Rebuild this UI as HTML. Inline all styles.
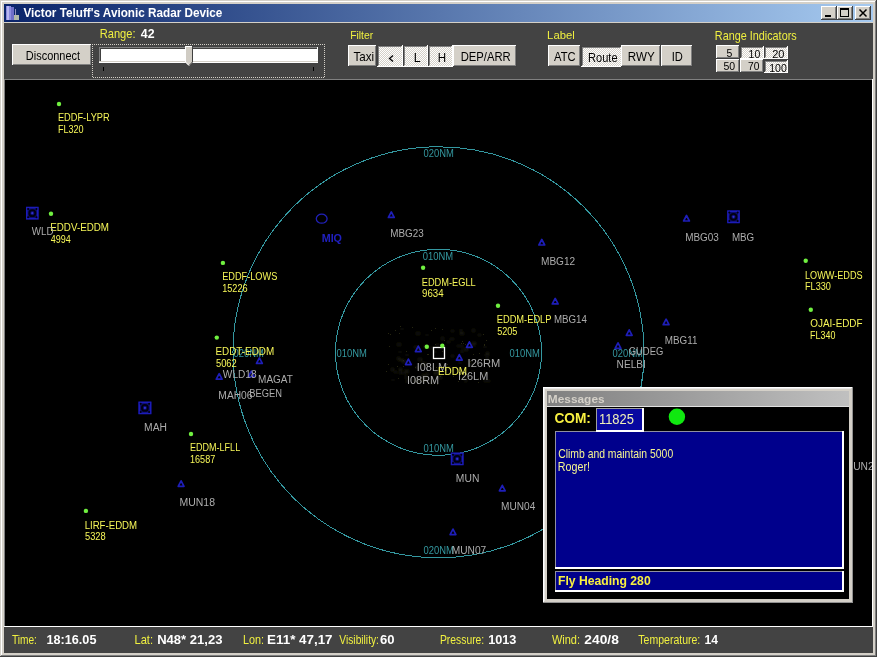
<!DOCTYPE html><html><head><meta charset="utf-8"><style>html,body{margin:0;padding:0;background:#D4D0C8;overflow:hidden}svg{display:block;font-family:"Liberation Sans",sans-serif;will-change:transform}</style></head><body><svg width="877" height="657" viewBox="0 0 877 657"><rect x="0" y="0" width="877" height="657" fill="#D4D0C8"/>
<rect x="0" y="0" width="876" height="1" fill="#D4D0C8"/>
<rect x="1" y="1" width="874" height="1" fill="#FFFFFF"/>
<rect x="1" y="1" width="1" height="654" fill="#FFFFFF"/>
<rect x="876" y="0" width="1" height="657" fill="#404040"/>
<rect x="0" y="656" width="877" height="1" fill="#404040"/>
<rect x="875" y="1" width="1" height="655" fill="#808080"/>
<rect x="1" y="655" width="875" height="1" fill="#808080"/>
<defs><linearGradient id="tg" x1="0" x2="1" y1="0" y2="0"><stop offset="0" stop-color="#0A246A"/><stop offset="1" stop-color="#A6CAF0"/></linearGradient><linearGradient id="mg" x1="0" x2="1" y1="0" y2="0"><stop offset="0" stop-color="#808080"/><stop offset="1" stop-color="#C0C0C0"/></linearGradient><pattern id="dot" width="2" height="2" patternUnits="userSpaceOnUse"><rect width="1" height="1" fill="#D4D0C8"/><rect x="1" y="1" width="1" height="1" fill="#D4D0C8"/></pattern><pattern id="dith" width="2" height="2" patternUnits="userSpaceOnUse"><rect width="2" height="2" fill="#D4D0C8"/><rect width="1" height="1" fill="#FFFFFF"/><rect x="1" y="1" width="1" height="1" fill="#FFFFFF"/></pattern></defs>
<rect x="4" y="4" width="869" height="18" fill="url(#tg)"/>
<rect x="6" y="6" width="5" height="14" fill="#8C8CE0"/>
<rect x="7" y="6" width="2" height="14" fill="#B8B8F0"/>
<rect x="11" y="7" width="3" height="13" fill="#6E6EC8"/>
<rect x="14" y="15" width="5" height="5" fill="#B0B8A8"/>
<rect x="15" y="9" width="1" height="6" fill="#9090C0"/>
<text x="23.38" y="17.0" font-size="12.32" fill="#FFFFFF" font-weight="bold" textLength="199.03" lengthAdjust="spacingAndGlyphs">Victor Teluff's Avionic Radar Device</text>
<rect x="821" y="6" width="16" height="14" fill="#404040"/>
<rect x="821" y="6" width="15" height="13" fill="#FFFFFF"/>
<rect x="822" y="7" width="14" height="12" fill="#808080"/>
<rect x="822" y="7" width="13" height="11" fill="#D4D0C8"/>
<rect x="823" y="8" width="12" height="10" fill="#D4D0C8"/>
<rect x="825" y="15" width="6" height="2" fill="#000000"/>
<rect x="837" y="6" width="16" height="14" fill="#404040"/>
<rect x="837" y="6" width="15" height="13" fill="#FFFFFF"/>
<rect x="838" y="7" width="14" height="12" fill="#808080"/>
<rect x="838" y="7" width="13" height="11" fill="#D4D0C8"/>
<rect x="839" y="8" width="12" height="10" fill="#D4D0C8"/>
<rect x="840.5" y="8.5" width="8" height="8" fill="none" stroke="#000" stroke-width="1"/>
<rect x="840" y="8" width="9" height="2" fill="#000"/>
<rect x="855" y="6" width="16" height="14" fill="#404040"/>
<rect x="855" y="6" width="15" height="13" fill="#FFFFFF"/>
<rect x="856" y="7" width="14" height="12" fill="#808080"/>
<rect x="856" y="7" width="13" height="11" fill="#D4D0C8"/>
<rect x="857" y="8" width="12" height="10" fill="#D4D0C8"/>
<path d="M859.5 9.5 L866.5 16.5 M866.5 9.5 L859.5 16.5" stroke="#000" stroke-width="1.5"/>
<rect x="4" y="22" width="869" height="1" fill="#D4D0C8"/>
<rect x="4" y="23" width="869" height="56" fill="#434343"/>
<rect x="4" y="627" width="869" height="26" fill="#434343"/>
<rect x="4" y="79" width="869" height="1" fill="#808080"/>
<rect x="4" y="79" width="1" height="548" fill="#808080"/>
<rect x="872" y="79" width="1" height="548" fill="#FFFFFF"/>
<rect x="4" y="626" width="869" height="1" fill="#FFFFFF"/>
<rect x="5" y="80" width="867" height="546" fill="#000000"/>
<rect x="12" y="44" width="80" height="22" fill="#404040"/>
<rect x="12" y="44" width="79" height="21" fill="#FFFFFF"/>
<rect x="13" y="45" width="78" height="20" fill="#808080"/>
<rect x="13" y="45" width="77" height="19" fill="#D4D0C8"/>
<rect x="14" y="46" width="76" height="18" fill="#D4D0C8"/>
<text x="25.82" y="59.9" font-size="12.61" fill="#000000" font-weight="normal" textLength="54.25" lengthAdjust="spacingAndGlyphs">Disconnect</text>
<text x="99.71" y="38.4" font-size="12.46" fill="#F0F040" font-weight="normal" textLength="35.78" lengthAdjust="spacingAndGlyphs">Range:</text>
<text x="140.82" y="38.4" font-size="12.46" fill="#FFFFFF" font-weight="bold" textLength="13.71" lengthAdjust="spacingAndGlyphs">42</text>
<rect x="92" y="44" width="233" height="1" fill="url(#dot)"/>
<rect x="92" y="77" width="233" height="1" fill="url(#dot)"/>
<rect x="92" y="44" width="1" height="34" fill="url(#dot)"/>
<rect x="324" y="44" width="1" height="34" fill="url(#dot)"/>
<rect x="99" y="47" width="219" height="15" fill="#FFFFFF"/>
<rect x="99" y="47" width="219" height="1" fill="#808080"/>
<rect x="99" y="47" width="1" height="15" fill="#808080"/>
<rect x="100" y="48" width="217" height="1" fill="#404040"/>
<rect x="100" y="48" width="1" height="13" fill="#404040"/>
<rect x="317" y="47" width="1" height="15" fill="#FFFFFF"/>
<rect x="99" y="61" width="219" height="1" fill="#D4D0C8"/>
<rect x="99" y="62" width="219" height="1" fill="#FFFFFF"/>
<rect x="101" y="49" width="216" height="12" fill="#FFFFFF"/>
<path d="M185 46 H193 V62 L189 66 L185 62 Z" fill="#D4D0C8"/>
<rect x="186" y="47" width="6" height="15" fill="#D0CCC4"/>
<path d="M185.5 62 V46.5 H192.5" fill="none" stroke="#FFFFFF" stroke-width="1"/>
<path d="M185.5 62 L189 65.5" fill="none" stroke="#FFFFFF" stroke-width="1"/>
<path d="M192.5 46 V62 L189 65.5" fill="none" stroke="#404040" stroke-width="1"/>
<rect x="103" y="67" width="1" height="4" fill="#000000"/>
<rect x="313" y="67" width="1" height="4" fill="#000000"/>
<text x="350.17" y="38.9" font-size="11.45" fill="#F0F040" font-weight="normal" textLength="23.01" lengthAdjust="spacingAndGlyphs">Filter</text>
<rect x="348" y="45" width="29" height="22" fill="#404040"/>
<rect x="348" y="45" width="28" height="21" fill="#FFFFFF"/>
<rect x="349" y="46" width="27" height="20" fill="#808080"/>
<rect x="349" y="46" width="26" height="19" fill="#D4D0C8"/>
<rect x="350" y="47" width="25" height="18" fill="#D4D0C8"/>
<text x="353.41" y="60.9" font-size="12.90" fill="#000000" font-weight="normal" textLength="20.69" lengthAdjust="spacingAndGlyphs">Taxi</text>
<rect x="377" y="45" width="26" height="22" fill="#FFFFFF"/>
<rect x="377" y="45" width="25" height="21" fill="#404040"/>
<rect x="378" y="46" width="24" height="20" fill="#D4D0C8"/>
<rect x="378" y="46" width="23" height="19" fill="#808080"/>
<rect x="379" y="47" width="23" height="19" fill="url(#dith)"/>
<path d="M393 55.5 L389.5 58.5 L393 61.5" fill="none" stroke="#000" stroke-width="1.3"/>
<rect x="403" y="45" width="25" height="22" fill="#FFFFFF"/>
<rect x="403" y="45" width="24" height="21" fill="#404040"/>
<rect x="404" y="46" width="23" height="20" fill="#D4D0C8"/>
<rect x="404" y="46" width="22" height="19" fill="#808080"/>
<rect x="405" y="47" width="22" height="19" fill="url(#dith)"/>
<text x="413.81" y="61.6" font-size="12.46" fill="#000000" font-weight="normal" textLength="6.87" lengthAdjust="spacingAndGlyphs">L</text>
<rect x="428" y="45" width="25" height="22" fill="#FFFFFF"/>
<rect x="428" y="45" width="24" height="21" fill="#404040"/>
<rect x="429" y="46" width="23" height="20" fill="#D4D0C8"/>
<rect x="429" y="46" width="22" height="19" fill="#808080"/>
<rect x="430" y="47" width="22" height="19" fill="url(#dith)"/>
<text x="437.77" y="61.6" font-size="12.46" fill="#000000" font-weight="normal" textLength="8.38" lengthAdjust="spacingAndGlyphs">H</text>
<rect x="453" y="45" width="64" height="22" fill="#404040"/>
<rect x="453" y="45" width="63" height="21" fill="#FFFFFF"/>
<rect x="454" y="46" width="62" height="20" fill="#808080"/>
<rect x="454" y="46" width="61" height="19" fill="#D4D0C8"/>
<rect x="455" y="47" width="60" height="18" fill="#D4D0C8"/>
<text x="460.70" y="60.6" font-size="12.17" fill="#000000" font-weight="normal" textLength="50.07" lengthAdjust="spacingAndGlyphs">DEP/ARR</text>
<text x="547.10" y="38.8" font-size="11.16" fill="#F0F040" font-weight="normal" textLength="27.66" lengthAdjust="spacingAndGlyphs">Label</text>
<rect x="548" y="45" width="33" height="22" fill="#404040"/>
<rect x="548" y="45" width="32" height="21" fill="#FFFFFF"/>
<rect x="549" y="46" width="31" height="20" fill="#808080"/>
<rect x="549" y="46" width="30" height="19" fill="#D4D0C8"/>
<rect x="550" y="47" width="29" height="18" fill="#D4D0C8"/>
<text x="554.04" y="60.7" font-size="12.61" fill="#000000" font-weight="normal" textLength="21.51" lengthAdjust="spacingAndGlyphs">ATC</text>
<rect x="581" y="46" width="41" height="21" fill="#FFFFFF"/>
<rect x="581" y="46" width="40" height="20" fill="#404040"/>
<rect x="582" y="47" width="39" height="19" fill="#D4D0C8"/>
<rect x="582" y="47" width="38" height="18" fill="#808080"/>
<rect x="583" y="48" width="38" height="18" fill="url(#dith)"/>
<text x="588.12" y="61.6" font-size="12.17" fill="#000000" font-weight="normal" textLength="29.46" lengthAdjust="spacingAndGlyphs">Route</text>
<rect x="621" y="45" width="40" height="22" fill="#404040"/>
<rect x="621" y="45" width="39" height="21" fill="#FFFFFF"/>
<rect x="622" y="46" width="38" height="20" fill="#808080"/>
<rect x="622" y="46" width="37" height="19" fill="#D4D0C8"/>
<rect x="623" y="47" width="36" height="18" fill="#D4D0C8"/>
<text x="627.77" y="60.7" font-size="12.61" fill="#000000" font-weight="normal" textLength="26.92" lengthAdjust="spacingAndGlyphs">RWY</text>
<rect x="661" y="45" width="32" height="22" fill="#404040"/>
<rect x="661" y="45" width="31" height="21" fill="#FFFFFF"/>
<rect x="662" y="46" width="30" height="20" fill="#808080"/>
<rect x="662" y="46" width="29" height="19" fill="#D4D0C8"/>
<rect x="663" y="47" width="28" height="18" fill="#D4D0C8"/>
<text x="671.70" y="60.7" font-size="12.61" fill="#000000" font-weight="normal" textLength="11.16" lengthAdjust="spacingAndGlyphs">ID</text>
<text x="714.83" y="40.4" font-size="12.46" fill="#F0F040" font-weight="normal" textLength="81.85" lengthAdjust="spacingAndGlyphs">Range Indicators</text>
<rect x="716" y="45" width="24" height="14" fill="#404040"/>
<rect x="716" y="45" width="23" height="13" fill="#FFFFFF"/>
<rect x="717" y="46" width="22" height="12" fill="#808080"/>
<rect x="717" y="46" width="21" height="11" fill="#D4D0C8"/>
<rect x="718" y="47" width="20" height="10" fill="#D4D0C8"/>
<text x="726.58" y="56.6" font-size="11.30" fill="#000000" font-weight="normal" textLength="5.85" lengthAdjust="spacingAndGlyphs">5</text>
<rect x="740" y="46" width="24" height="13" fill="#FFFFFF"/>
<rect x="740" y="46" width="23" height="12" fill="#404040"/>
<rect x="741" y="47" width="22" height="11" fill="#D4D0C8"/>
<rect x="741" y="47" width="21" height="10" fill="#808080"/>
<rect x="742" y="48" width="21" height="10" fill="url(#dith)"/>
<text x="748.61" y="57.5" font-size="11.16" fill="#000000" font-weight="normal" textLength="11.68" lengthAdjust="spacingAndGlyphs">10</text>
<rect x="764" y="46" width="24" height="13" fill="#FFFFFF"/>
<rect x="764" y="46" width="23" height="12" fill="#404040"/>
<rect x="765" y="47" width="22" height="11" fill="#D4D0C8"/>
<rect x="765" y="47" width="21" height="10" fill="#808080"/>
<rect x="766" y="48" width="21" height="10" fill="url(#dith)"/>
<text x="772.15" y="57.5" font-size="11.16" fill="#000000" font-weight="normal" textLength="12.26" lengthAdjust="spacingAndGlyphs">20</text>
<rect x="716" y="59" width="24" height="14" fill="#404040"/>
<rect x="716" y="59" width="23" height="13" fill="#FFFFFF"/>
<rect x="717" y="60" width="22" height="12" fill="#808080"/>
<rect x="717" y="60" width="21" height="11" fill="#D4D0C8"/>
<rect x="718" y="61" width="20" height="10" fill="#D4D0C8"/>
<text x="723.48" y="70.3" font-size="11.30" fill="#000000" font-weight="normal" textLength="11.71" lengthAdjust="spacingAndGlyphs">50</text>
<rect x="740" y="59" width="24" height="14" fill="#404040"/>
<rect x="740" y="59" width="23" height="13" fill="#FFFFFF"/>
<rect x="741" y="60" width="22" height="12" fill="#808080"/>
<rect x="741" y="60" width="21" height="11" fill="#D4D0C8"/>
<rect x="742" y="61" width="20" height="10" fill="#D4D0C8"/>
<text x="747.99" y="70.3" font-size="11.30" fill="#000000" font-weight="normal" textLength="11.39" lengthAdjust="spacingAndGlyphs">70</text>
<rect x="764" y="60" width="24" height="13" fill="#FFFFFF"/>
<rect x="764" y="60" width="23" height="12" fill="#404040"/>
<rect x="765" y="61" width="22" height="11" fill="#D4D0C8"/>
<rect x="765" y="61" width="21" height="10" fill="#808080"/>
<rect x="766" y="62" width="21" height="10" fill="url(#dith)"/>
<text x="769.21" y="71.5" font-size="11.74" fill="#000000" font-weight="normal" textLength="17.60" lengthAdjust="spacingAndGlyphs">100</text>
<text x="11.95" y="643.8" font-size="13.04" fill="#F0F040" font-weight="normal" textLength="25.00" lengthAdjust="spacingAndGlyphs">Time:</text>
<text x="46.48" y="643.8" font-size="13.04" fill="#FFFFFF" font-weight="bold" textLength="49.97" lengthAdjust="spacingAndGlyphs">18:16.05</text>
<text x="134.51" y="643.8" font-size="13.04" fill="#F0F040" font-weight="normal" textLength="18.52" lengthAdjust="spacingAndGlyphs">Lat:</text>
<text x="157.15" y="643.8" font-size="13.04" fill="#FFFFFF" font-weight="bold" textLength="65.36" lengthAdjust="spacingAndGlyphs">N48* 21,23</text>
<text x="242.93" y="643.8" font-size="13.04" fill="#F0F040" font-weight="normal" textLength="21.05" lengthAdjust="spacingAndGlyphs">Lon:</text>
<text x="267.13" y="643.8" font-size="13.04" fill="#FFFFFF" font-weight="bold" textLength="65.45" lengthAdjust="spacingAndGlyphs">E11* 47,17</text>
<text x="339.35" y="643.8" font-size="13.04" fill="#F0F040" font-weight="normal" textLength="39.59" lengthAdjust="spacingAndGlyphs">Visibility:</text>
<text x="380.04" y="643.8" font-size="13.04" fill="#FFFFFF" font-weight="bold" textLength="14.51" lengthAdjust="spacingAndGlyphs">60</text>
<text x="439.97" y="643.8" font-size="13.04" fill="#F0F040" font-weight="normal" textLength="44.25" lengthAdjust="spacingAndGlyphs">Pressure:</text>
<text x="488.17" y="643.8" font-size="13.04" fill="#FFFFFF" font-weight="bold" textLength="28.27" lengthAdjust="spacingAndGlyphs">1013</text>
<text x="551.95" y="643.8" font-size="13.04" fill="#F0F040" font-weight="normal" textLength="28.06" lengthAdjust="spacingAndGlyphs">Wind:</text>
<text x="584.32" y="643.8" font-size="13.04" fill="#FFFFFF" font-weight="bold" textLength="34.53" lengthAdjust="spacingAndGlyphs">240/8</text>
<text x="638.34" y="643.8" font-size="13.04" fill="#F0F040" font-weight="normal" textLength="61.93" lengthAdjust="spacingAndGlyphs">Temperature:</text>
<text x="704.61" y="643.8" font-size="13.04" fill="#FFFFFF" font-weight="bold" textLength="13.48" lengthAdjust="spacingAndGlyphs">14</text>
<g clip-path="url(#rc)">
<clipPath id="rc"><rect x="5" y="80" width="867" height="546"/></clipPath>
<circle cx="438.5" cy="352.3" r="103" fill="none" stroke="#3498A0" stroke-width="1" shape-rendering="crispEdges"/>
<circle cx="438.5" cy="352.3" r="205.5" fill="none" stroke="#3498A0" stroke-width="1" shape-rendering="crispEdges"/>
<filter id="bl" x="-20%" y="-20%" width="140%" height="140%"><feGaussianBlur stdDeviation="1.6"/></filter>
<g fill="#1C1C0C" filter="url(#bl)">
<rect x="450" y="368" width="4" height="2"/>
<rect x="472" y="370" width="2" height="2"/>
<rect x="478" y="334" width="3" height="2"/>
<rect x="426" y="334" width="2" height="2"/>
<rect x="461" y="350" width="2" height="3"/>
<rect x="404" y="371" width="2" height="3"/>
<rect x="401" y="328" width="2" height="2"/>
<rect x="465" y="380" width="2" height="2"/>
<rect x="417" y="380" width="4" height="2"/>
<rect x="406" y="380" width="2" height="3"/>
<rect x="418" y="348" width="2" height="2"/>
<rect x="414" y="346" width="4" height="2"/>
<rect x="448" y="366" width="2" height="3"/>
<rect x="424" y="345" width="4" height="3"/>
<rect x="406" y="354" width="2" height="2"/>
<rect x="414" y="379" width="4" height="3"/>
<rect x="472" y="329" width="3" height="3"/>
<rect x="426" y="373" width="3" height="2"/>
<rect x="459" y="362" width="2" height="2"/>
<rect x="464" y="378" width="3" height="3"/>
<rect x="439" y="376" width="3" height="3"/>
<rect x="399" y="368" width="3" height="3"/>
<rect x="392" y="379" width="2" height="2"/>
<rect x="422" y="361" width="2" height="3"/>
<rect x="416" y="366" width="2" height="3"/>
<rect x="457" y="345" width="2" height="2"/>
<rect x="460" y="345" width="3" height="2"/>
<rect x="460" y="332" width="4" height="3"/>
<rect x="391" y="368" width="3" height="3"/>
<rect x="434" y="351" width="2" height="2"/>
<rect x="468" y="346" width="2" height="2"/>
<rect x="486" y="358" width="2" height="3"/>
<rect x="399" y="351" width="2" height="2"/>
<rect x="472" y="344" width="3" height="2"/>
<rect x="486" y="352" width="3" height="3"/>
<rect x="436" y="344" width="3" height="2"/>
<rect x="399" y="372" width="4" height="2"/>
<rect x="451" y="355" width="3" height="2"/>
<rect x="397" y="343" width="4" height="3"/>
<rect x="394" y="371" width="3" height="2"/>
<rect x="464" y="348" width="4" height="3"/>
<rect x="472" y="342" width="4" height="3"/>
<rect x="484" y="346" width="2" height="2"/>
<rect x="435" y="370" width="3" height="3"/>
<rect x="434" y="372" width="4" height="3"/>
<rect x="423" y="363" width="4" height="3"/>
<rect x="423" y="374" width="4" height="3"/>
<rect x="486" y="380" width="4" height="2"/>
<rect x="441" y="337" width="3" height="3"/>
<rect x="416" y="332" width="4" height="3"/>
<rect x="405" y="370" width="4" height="3"/>
<rect x="418" y="358" width="4" height="3"/>
<rect x="460" y="329" width="2" height="3"/>
<rect x="450" y="338" width="4" height="2"/>
<rect x="451" y="330" width="3" height="2"/>
<rect x="405" y="376" width="2" height="3"/>
<rect x="485" y="354" width="4" height="2"/>
<rect x="430" y="347" width="4" height="2"/>
<rect x="447" y="341" width="3" height="2"/>
<rect x="423" y="379" width="3" height="2"/>
<rect x="457" y="358" width="2" height="3"/>
<rect x="397" y="357" width="3" height="3"/>
<rect x="484" y="372" width="3" height="3"/>
<rect x="469" y="363" width="3" height="3"/>
<rect x="402" y="360" width="4" height="3"/>
<rect x="484" y="380" width="4" height="2"/>
<rect x="423" y="376" width="2" height="3"/>
<rect x="399" y="359" width="4" height="2"/>
<rect x="421" y="375" width="4" height="3"/>
<rect x="431" y="381" width="3" height="3"/>
</g><g fill="#262610">
<rect x="436" y="367" width="1" height="1"/>
<rect x="426" y="376" width="1" height="1"/>
<rect x="403" y="360" width="1" height="1"/>
<rect x="463" y="343" width="1" height="1"/>
<rect x="412" y="327" width="1" height="1"/>
<rect x="484" y="344" width="1" height="1"/>
<rect x="483" y="334" width="1" height="1"/>
<rect x="388" y="364" width="1" height="1"/>
<rect x="486" y="340" width="1" height="1"/>
<rect x="390" y="334" width="1" height="1"/>
<rect x="427" y="354" width="1" height="1"/>
<rect x="444" y="340" width="1" height="1"/>
<rect x="435" y="328" width="1" height="1"/>
<rect x="437" y="375" width="1" height="1"/>
<rect x="461" y="343" width="1" height="1"/>
<rect x="437" y="384" width="1" height="1"/>
<rect x="440" y="376" width="1" height="1"/>
<rect x="478" y="378" width="1" height="1"/>
<rect x="388" y="333" width="1" height="1"/>
<rect x="415" y="367" width="1" height="1"/>
<rect x="450" y="368" width="1" height="1"/>
<rect x="389" y="346" width="1" height="1"/>
<rect x="457" y="373" width="1" height="1"/>
<rect x="400" y="326" width="1" height="1"/>
<rect x="444" y="366" width="1" height="1"/>
<rect x="397" y="366" width="1" height="1"/>
<rect x="406" y="351" width="1" height="1"/>
<rect x="470" y="361" width="1" height="1"/>
<rect x="458" y="381" width="1" height="1"/>
<rect x="453" y="376" width="1" height="1"/>
<rect x="473" y="354" width="1" height="1"/>
<rect x="457" y="368" width="1" height="1"/>
<rect x="479" y="353" width="1" height="1"/>
<rect x="465" y="344" width="1" height="1"/>
<rect x="386" y="371" width="1" height="1"/>
<rect x="447" y="364" width="1" height="1"/>
<rect x="435" y="344" width="1" height="1"/>
<rect x="403" y="366" width="1" height="1"/>
<rect x="478" y="382" width="1" height="1"/>
<rect x="442" y="351" width="1" height="1"/>
<rect x="442" y="329" width="1" height="1"/>
<rect x="462" y="341" width="1" height="1"/>
<rect x="395" y="330" width="1" height="1"/>
<rect x="484" y="345" width="1" height="1"/>
<rect x="431" y="330" width="1" height="1"/>
<rect x="428" y="354" width="1" height="1"/>
<rect x="399" y="333" width="1" height="1"/>
<rect x="450" y="374" width="1" height="1"/>
<rect x="398" y="378" width="1" height="1"/>
<rect x="489" y="367" width="1" height="1"/>
</g>
<text x="423.62" y="156.7" font-size="10.00" fill="#3498A0" font-weight="normal" textLength="30.36" lengthAdjust="spacingAndGlyphs">020NM</text>
<text x="422.82" y="259.6" font-size="10.00" fill="#3498A0" font-weight="normal" textLength="30.36" lengthAdjust="spacingAndGlyphs">010NM</text>
<text x="336.52" y="356.9" font-size="10.00" fill="#3498A0" font-weight="normal" textLength="30.36" lengthAdjust="spacingAndGlyphs">010NM</text>
<text x="509.62" y="357.0" font-size="10.00" fill="#3498A0" font-weight="normal" textLength="30.36" lengthAdjust="spacingAndGlyphs">010NM</text>
<text x="612.62" y="357.0" font-size="10.00" fill="#3498A0" font-weight="normal" textLength="30.36" lengthAdjust="spacingAndGlyphs">020NM</text>
<text x="233.62" y="356.9" font-size="10.00" fill="#3498A0" font-weight="normal" textLength="30.36" lengthAdjust="spacingAndGlyphs">020NM</text>
<text x="423.52" y="451.6" font-size="10.00" fill="#3498A0" font-weight="normal" textLength="30.36" lengthAdjust="spacingAndGlyphs">010NM</text>
<text x="423.52" y="554.3" font-size="10.00" fill="#3498A0" font-weight="normal" textLength="30.36" lengthAdjust="spacingAndGlyphs">020NM</text>
<path d="M391.3 211.9 L394.2 217.4 L388.4 217.4 Z" fill="none" stroke="#1E1EB8" stroke-width="1.7" stroke-linejoin="round"/>
<path d="M541.8 239.5 L544.7 245.0 L538.9 245.0 Z" fill="none" stroke="#1E1EB8" stroke-width="1.7" stroke-linejoin="round"/>
<path d="M555.2 298.4 L558.1 303.9 L552.3 303.9 Z" fill="none" stroke="#1E1EB8" stroke-width="1.7" stroke-linejoin="round"/>
<path d="M629.2 329.8 L632.1 335.3 L626.3 335.3 Z" fill="none" stroke="#1E1EB8" stroke-width="1.7" stroke-linejoin="round"/>
<path d="M618.0 342.8 L620.9 348.3 L615.1 348.3 Z" fill="none" stroke="#1E1EB8" stroke-width="1.7" stroke-linejoin="round"/>
<path d="M666.1 319.2 L669.0 324.7 L663.2 324.7 Z" fill="none" stroke="#1E1EB8" stroke-width="1.7" stroke-linejoin="round"/>
<path d="M686.5 215.5 L689.4 221.0 L683.6 221.0 Z" fill="none" stroke="#1E1EB8" stroke-width="1.7" stroke-linejoin="round"/>
<path d="M418.3 346.1 L421.2 351.6 L415.4 351.6 Z" fill="none" stroke="#1E1EB8" stroke-width="1.7" stroke-linejoin="round"/>
<path d="M408.4 359.1 L411.3 364.6 L405.5 364.6 Z" fill="none" stroke="#1E1EB8" stroke-width="1.7" stroke-linejoin="round"/>
<path d="M459.3 354.6 L462.2 360.1 L456.4 360.1 Z" fill="none" stroke="#1E1EB8" stroke-width="1.7" stroke-linejoin="round"/>
<path d="M469.4 341.8 L472.3 347.3 L466.5 347.3 Z" fill="none" stroke="#1E1EB8" stroke-width="1.7" stroke-linejoin="round"/>
<path d="M259.4 357.9 L262.3 363.4 L256.5 363.4 Z" fill="none" stroke="#1E1EB8" stroke-width="1.7" stroke-linejoin="round"/>
<path d="M219.2 373.7 L222.1 379.2 L216.3 379.2 Z" fill="none" stroke="#1E1EB8" stroke-width="1.7" stroke-linejoin="round"/>
<path d="M251.3 371.1 L254.2 376.6 L248.4 376.6 Z" fill="none" stroke="#1E1EB8" stroke-width="1.7" stroke-linejoin="round"/>
<path d="M181.1 480.8 L184.0 486.3 L178.2 486.3 Z" fill="none" stroke="#1E1EB8" stroke-width="1.7" stroke-linejoin="round"/>
<path d="M502.3 485.3 L505.2 490.8 L499.4 490.8 Z" fill="none" stroke="#1E1EB8" stroke-width="1.7" stroke-linejoin="round"/>
<path d="M453.0 529.1 L455.9 534.6 L450.1 534.6 Z" fill="none" stroke="#1E1EB8" stroke-width="1.7" stroke-linejoin="round"/>
<rect x="26.0" y="206.8" width="12.6" height="12.7" fill="#0C0C68"/>
<rect x="26.8" y="207.6" width="11.0" height="11.1" fill="none" stroke="#1C1CB8" stroke-width="1.6"/>
<circle cx="32.3" cy="213.2" r="3.0" fill="none" stroke="#000010" stroke-width="1.8"/>
<circle cx="32.3" cy="213.2" r="1.1" fill="#3030D0"/>
<circle cx="28.1" cy="209.0" r="1.0" fill="#000010"/>
<circle cx="36.5" cy="209.0" r="1.0" fill="#000010"/>
<circle cx="28.1" cy="217.3" r="1.0" fill="#000010"/>
<circle cx="36.5" cy="217.3" r="1.0" fill="#000010"/>
<rect x="727.2" y="210.4" width="12.6" height="12.8" fill="#0C0C68"/>
<rect x="728.0" y="211.2" width="11.0" height="11.2" fill="none" stroke="#1C1CB8" stroke-width="1.6"/>
<circle cx="733.5" cy="216.8" r="3.0" fill="none" stroke="#000010" stroke-width="1.8"/>
<circle cx="733.5" cy="216.8" r="1.1" fill="#3030D0"/>
<circle cx="729.3" cy="212.6" r="1.0" fill="#000010"/>
<circle cx="737.7" cy="212.6" r="1.0" fill="#000010"/>
<circle cx="729.3" cy="221.0" r="1.0" fill="#000010"/>
<circle cx="737.7" cy="221.0" r="1.0" fill="#000010"/>
<rect x="138.4" y="401.6" width="13.0" height="12.6" fill="#0C0C68"/>
<rect x="139.2" y="402.4" width="11.4" height="11.0" fill="none" stroke="#1C1CB8" stroke-width="1.6"/>
<circle cx="144.9" cy="407.9" r="3.0" fill="none" stroke="#000010" stroke-width="1.8"/>
<circle cx="144.9" cy="407.9" r="1.1" fill="#3030D0"/>
<circle cx="140.7" cy="403.7" r="1.0" fill="#000010"/>
<circle cx="149.1" cy="403.7" r="1.0" fill="#000010"/>
<circle cx="140.7" cy="412.1" r="1.0" fill="#000010"/>
<circle cx="149.1" cy="412.1" r="1.0" fill="#000010"/>
<rect x="450.8" y="452.6" width="12.8" height="12.6" fill="#0C0C68"/>
<rect x="451.6" y="453.4" width="11.2" height="11.0" fill="none" stroke="#1C1CB8" stroke-width="1.6"/>
<circle cx="457.2" cy="458.9" r="3.0" fill="none" stroke="#000010" stroke-width="1.8"/>
<circle cx="457.2" cy="458.9" r="1.1" fill="#3030D0"/>
<circle cx="453.0" cy="454.7" r="1.0" fill="#000010"/>
<circle cx="461.4" cy="454.7" r="1.0" fill="#000010"/>
<circle cx="453.0" cy="463.1" r="1.0" fill="#000010"/>
<circle cx="461.4" cy="463.1" r="1.0" fill="#000010"/>
<ellipse cx="321.7" cy="218.7" rx="5.4" ry="4.5" fill="none" stroke="#2020B8" stroke-width="1.3"/>
<rect x="433.5" y="347.5" width="11" height="11" fill="none" stroke="#FFFFFF" stroke-width="1.3"/>
<circle cx="59" cy="104" r="2.2" fill="#70F040"/>
<circle cx="51" cy="213.8" r="2.2" fill="#70F040"/>
<circle cx="222.9" cy="262.9" r="2.2" fill="#70F040"/>
<circle cx="216.8" cy="337.6" r="2.2" fill="#70F040"/>
<circle cx="423.1" cy="267.8" r="2.2" fill="#70F040"/>
<circle cx="498" cy="305.8" r="2.2" fill="#70F040"/>
<circle cx="426.8" cy="346.8" r="2.2" fill="#70F040"/>
<circle cx="442.3" cy="345.8" r="2.2" fill="#70F040"/>
<circle cx="805.7" cy="260.8" r="2.2" fill="#70F040"/>
<circle cx="810.8" cy="309.7" r="2.2" fill="#70F040"/>
<circle cx="191" cy="434" r="2.2" fill="#70F040"/>
<circle cx="85.9" cy="510.9" r="2.2" fill="#70F040"/>
<text x="57.96" y="121.4" font-size="10.00" fill="#F6F658" font-weight="normal" textLength="51.69" lengthAdjust="spacingAndGlyphs">EDDF-LYPR</text>
<text x="57.98" y="133.0" font-size="10.00" fill="#F6F658" font-weight="normal" textLength="25.69" lengthAdjust="spacingAndGlyphs">FL320</text>
<text x="50.22" y="231.4" font-size="10.00" fill="#F6F658" font-weight="normal" textLength="58.77" lengthAdjust="spacingAndGlyphs">EDDV-EDDM</text>
<text x="50.78" y="243.0" font-size="10.00" fill="#F6F658" font-weight="normal" textLength="19.99" lengthAdjust="spacingAndGlyphs">4994</text>
<text x="31.75" y="235.3" font-size="10.00" fill="#ACACAC" font-weight="normal" textLength="21.71" lengthAdjust="spacingAndGlyphs">WLD</text>
<text x="222.16" y="280.4" font-size="10.00" fill="#F6F658" font-weight="normal" textLength="55.15" lengthAdjust="spacingAndGlyphs">EDDF-LOWS</text>
<text x="222.21" y="291.9" font-size="10.00" fill="#F6F658" font-weight="normal" textLength="25.40" lengthAdjust="spacingAndGlyphs">15226</text>
<text x="222.85" y="377.8" font-size="10.00" fill="#ACACAC" font-weight="normal" textLength="33.80" lengthAdjust="spacingAndGlyphs">WLD18</text>
<text x="258.10" y="382.7" font-size="10.00" fill="#ACACAC" font-weight="normal" textLength="34.81" lengthAdjust="spacingAndGlyphs">MAGAT</text>
<text x="218.38" y="399.0" font-size="10.00" fill="#ACACAC" font-weight="normal" textLength="34.07" lengthAdjust="spacingAndGlyphs">MAH06</text>
<text x="249.35" y="397.3" font-size="10.00" fill="#ACACAC" font-weight="normal" textLength="32.70" lengthAdjust="spacingAndGlyphs">BEGEN</text>
<text x="215.51" y="355.2" font-size="10.00" fill="#F6F658" font-weight="normal" textLength="58.62" lengthAdjust="spacingAndGlyphs">EDDT-EDDM</text>
<text x="215.93" y="366.8" font-size="10.00" fill="#F6F658" font-weight="normal" textLength="20.84" lengthAdjust="spacingAndGlyphs">5062</text>
<text x="390.21" y="236.7" font-size="10.00" fill="#ACACAC" font-weight="normal" textLength="33.43" lengthAdjust="spacingAndGlyphs">MBG23</text>
<text x="421.76" y="285.5" font-size="10.00" fill="#F6F658" font-weight="normal" textLength="53.96" lengthAdjust="spacingAndGlyphs">EDDM-EGLL</text>
<text x="422.06" y="297.0" font-size="10.00" fill="#F6F658" font-weight="normal" textLength="21.52" lengthAdjust="spacingAndGlyphs">9634</text>
<text x="540.99" y="265.0" font-size="10.00" fill="#ACACAC" font-weight="normal" textLength="34.21" lengthAdjust="spacingAndGlyphs">MBG12</text>
<text x="685.21" y="240.8" font-size="10.00" fill="#ACACAC" font-weight="normal" textLength="33.64" lengthAdjust="spacingAndGlyphs">MBG03</text>
<text x="731.92" y="240.5" font-size="10.00" fill="#ACACAC" font-weight="normal" textLength="22.30" lengthAdjust="spacingAndGlyphs">MBG</text>
<text x="804.97" y="278.6" font-size="10.00" fill="#F6F658" font-weight="normal" textLength="57.64" lengthAdjust="spacingAndGlyphs">LOWW-EDDS</text>
<text x="804.97" y="290.0" font-size="10.00" fill="#F6F658" font-weight="normal" textLength="25.90" lengthAdjust="spacingAndGlyphs">FL330</text>
<text x="810.35" y="327.3" font-size="10.00" fill="#F6F658" font-weight="normal" textLength="52.22" lengthAdjust="spacingAndGlyphs">OJAI-EDDF</text>
<text x="810.09" y="339.2" font-size="10.00" fill="#F6F658" font-weight="normal" textLength="25.27" lengthAdjust="spacingAndGlyphs">FL340</text>
<text x="496.76" y="323.2" font-size="10.00" fill="#F6F658" font-weight="normal" textLength="54.75" lengthAdjust="spacingAndGlyphs">EDDM-EDLP</text>
<text x="497.14" y="335.2" font-size="10.00" fill="#F6F658" font-weight="normal" textLength="20.22" lengthAdjust="spacingAndGlyphs">5205</text>
<text x="553.92" y="323.2" font-size="10.00" fill="#ACACAC" font-weight="normal" textLength="32.97" lengthAdjust="spacingAndGlyphs">MBG14</text>
<text x="664.81" y="344.0" font-size="10.00" fill="#ACACAC" font-weight="normal" textLength="32.69" lengthAdjust="spacingAndGlyphs">MBG11</text>
<text x="628.73" y="355.3" font-size="10.00" fill="#ACACAC" font-weight="normal" textLength="34.60" lengthAdjust="spacingAndGlyphs">GUDEG</text>
<text x="616.59" y="367.8" font-size="10.00" fill="#ACACAC" font-weight="normal" textLength="29.33" lengthAdjust="spacingAndGlyphs">NELBI</text>
<text x="416.83" y="370.7" font-size="10.00" fill="#ACACAC" font-weight="normal" textLength="30.09" lengthAdjust="spacingAndGlyphs">I08LM</text>
<text x="407.02" y="383.5" font-size="10.00" fill="#ACACAC" font-weight="normal" textLength="32.16" lengthAdjust="spacingAndGlyphs">I08RM</text>
<text x="467.60" y="366.6" font-size="10.00" fill="#ACACAC" font-weight="normal" textLength="32.69" lengthAdjust="spacingAndGlyphs">I26RM</text>
<text x="458.02" y="379.5" font-size="10.00" fill="#ACACAC" font-weight="normal" textLength="30.19" lengthAdjust="spacingAndGlyphs">I26LM</text>
<text x="437.91" y="375.4" font-size="10.00" fill="#F6F658" font-weight="normal" textLength="29.13" lengthAdjust="spacingAndGlyphs">EDDM</text>
<text x="144.08" y="430.9" font-size="10.00" fill="#ACACAC" font-weight="normal" textLength="22.87" lengthAdjust="spacingAndGlyphs">MAH</text>
<text x="189.98" y="451.0" font-size="10.00" fill="#F6F658" font-weight="normal" textLength="50.21" lengthAdjust="spacingAndGlyphs">EDDM-LFLL</text>
<text x="190.02" y="463.0" font-size="10.00" fill="#F6F658" font-weight="normal" textLength="25.24" lengthAdjust="spacingAndGlyphs">16587</text>
<text x="179.46" y="506.0" font-size="10.00" fill="#ACACAC" font-weight="normal" textLength="35.51" lengthAdjust="spacingAndGlyphs">MUN18</text>
<text x="84.63" y="528.5" font-size="10.00" fill="#F6F658" font-weight="normal" textLength="52.48" lengthAdjust="spacingAndGlyphs">LIRF-EDDM</text>
<text x="85.03" y="540.1" font-size="10.00" fill="#F6F658" font-weight="normal" textLength="20.69" lengthAdjust="spacingAndGlyphs">5328</text>
<text x="455.88" y="482.0" font-size="10.00" fill="#ACACAC" font-weight="normal" textLength="23.47" lengthAdjust="spacingAndGlyphs">MUN</text>
<text x="501.09" y="510.0" font-size="10.00" fill="#ACACAC" font-weight="normal" textLength="34.21" lengthAdjust="spacingAndGlyphs">MUN04</text>
<text x="451.79" y="553.8" font-size="10.00" fill="#ACACAC" font-weight="normal" textLength="34.42" lengthAdjust="spacingAndGlyphs">MUN07</text>
<text x="844.68" y="469.9" font-size="10.00" fill="#ACACAC" font-weight="normal" textLength="34.73" lengthAdjust="spacingAndGlyphs">MUN25</text>
<text x="321.70" y="241.8" font-size="10.40" fill="#2020C0" font-weight="bold" textLength="20.27" lengthAdjust="spacingAndGlyphs">MIQ</text>
</g>
<rect x="543" y="387" width="310" height="216" fill="#909090"/>
<rect x="543" y="387" width="309" height="215" fill="#D4D0C8"/>
<rect x="543" y="387" width="309" height="1" fill="#FFFFFF"/>
<rect x="543" y="387" width="1" height="215" fill="#FFFFFF"/>
<rect x="544" y="388" width="307" height="1" fill="#E8E8E8"/>
<rect x="544" y="388" width="1" height="213" fill="#E8E8E8"/>
<rect x="547" y="391" width="302" height="15" fill="url(#mg)"/>
<rect x="547" y="406" width="302" height="1" fill="#E0E0E0"/>
<text x="547.83" y="402.9" font-size="11.30" fill="#D4D0C8" font-weight="bold" textLength="56.76" lengthAdjust="spacingAndGlyphs">Messages</text>
<rect x="547" y="407" width="302" height="192" fill="#000000"/>
<text x="554.45" y="423.0" font-size="14.49" fill="#F8F040" font-weight="bold" textLength="36.46" lengthAdjust="spacingAndGlyphs">COM:</text>
<rect x="596" y="408" width="48" height="24" fill="#FFFFFF"/>
<rect x="596" y="408" width="46" height="22" fill="#A0A0A0"/>
<rect x="597" y="409" width="45" height="21" fill="#0808A0"/>
<text x="598.93" y="424.0" font-size="14.64" fill="#F0F0B8" font-weight="normal" textLength="35.01" lengthAdjust="spacingAndGlyphs">11825</text>
<circle cx="676.9" cy="416.8" r="8.2" fill="#10E810"/>
<rect x="555" y="431" width="289" height="138" fill="#FFFFFF"/>
<rect x="555" y="431" width="287" height="136" fill="#9090A0"/>
<rect x="556" y="432" width="286" height="135" fill="#00008C"/>
<rect x="596" y="430" width="48" height="2" fill="#FFFFFF"/>
<text x="558.18" y="457.9" font-size="12.03" fill="#F4F490" font-weight="normal" textLength="115.00" lengthAdjust="spacingAndGlyphs">Climb and maintain 5000</text>
<text x="557.84" y="471.1" font-size="12.03" fill="#F4F490" font-weight="normal" textLength="32.14" lengthAdjust="spacingAndGlyphs">Roger!</text>
<rect x="555" y="571" width="289" height="21" fill="#FFFFFF"/>
<rect x="555" y="571" width="287" height="19" fill="#9090A0"/>
<rect x="556" y="572" width="286" height="18" fill="#00008C"/>
<text x="558.01" y="585.3" font-size="12.90" fill="#F8F040" font-weight="bold" textLength="92.66" lengthAdjust="spacingAndGlyphs">Fly Heading 280</text></svg></body></html>
